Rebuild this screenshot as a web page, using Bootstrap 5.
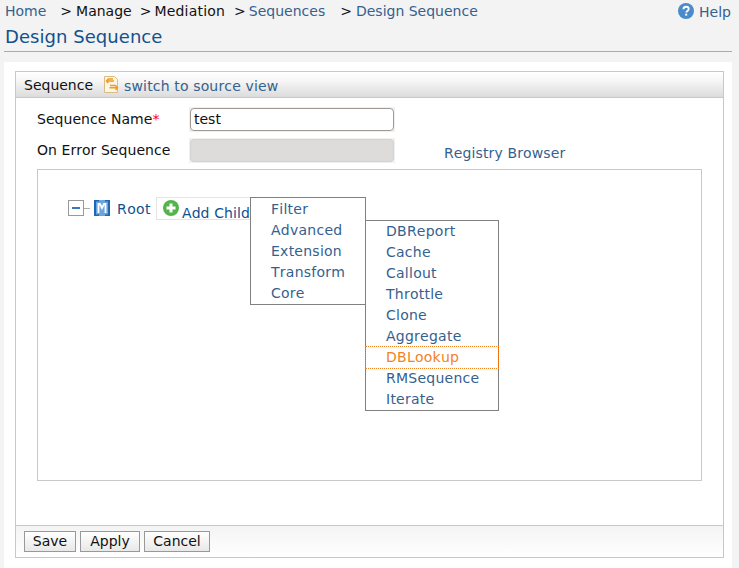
<!DOCTYPE html>
<html lang="en">
<head>
<meta charset="utf-8">
<title>Design Sequence</title>
<link rel="stylesheet" href="https://cdn.jsdelivr.net/npm/bootstrap@5.3.0/dist/css/bootstrap.min.css">
<style>
html,body{height:568px;overflow:hidden}
body{background:#f3f3f3;font-family:"DejaVu Sans",sans-serif;font-size:14px;line-height:17px;color:#111;font-kerning:none}
a{color:#35618f;text-decoration:none}
.crumbs{padding:3px 8px 0 5px;height:25px}
.crumbs .sep{color:#111}
.crumbs .sep-1{margin-left:14px;margin-right:4px}
.crumbs .sep-2{margin-left:8px;margin-right:3px}
.crumbs .sep-3{margin-left:9px;margin-right:3px}
.crumbs .sep-4{margin-left:15px;margin-right:4px}
.crumbs .plain{color:#111}
.crumbs .wide-word{letter-spacing:.2px}
.help-link{display:flex;align-items:flex-start;gap:5px;color:#35618f;margin-top:1px}
.help-link svg{margin-top:-1px}
.page-title{font-size:18px;line-height:22px;color:#12508e;font-weight:400;margin:0 0 0 5px;height:26px;padding-top:1px;font-kerning:none;letter-spacing:.05px}
.title-rule{border-bottom:1px solid #a0aac4;margin:0 7px 0 4px;height:1px}
.sheet{background:#fff;margin:10px 7px 0 4px;padding:9px 8px 0 11px;height:506px}
.seq-box{border:1px solid #c8c8c8;height:487px;display:flex;flex-direction:column}
.seq-head{height:26px;flex:none;border-bottom:1px solid #c8c8c8;background:linear-gradient(#fff,#f6f6f6 35%,#dcdcdc);display:flex;align-items:center;padding:2px 0 0 8px}
.seq-head .lbl{margin-right:11px}
.seq-head a{display:flex;align-items:center;gap:5px;margin-top:1px;letter-spacing:.15px}
.seq-head svg{margin-top:-3px}
.seq-body{flex:1;padding:0 21px;position:relative}
.field-row{display:flex;align-items:center}
.field-row label{width:153px;margin:0;letter-spacing:.05px}
.req{color:#f00}
.in-wrap{background:#f0f0f0;padding:1px;margin-left:-1px}
.in-box{display:block;width:204px;height:23px;border:1px solid #a09a96;border-radius:4px;background:#fff;padding:0 3px 2px;font-size:14px;line-height:20px;color:#111;font-family:inherit;font-kerning:none}
.in-box.off{background:#dedbdb;border-color:#d4d1d1}
.first-row{padding-top:9px}
.second-row{padding-top:6px;height:38px;align-items:flex-start}
.second-row label{padding-top:4px}
.second-row a{margin-left:49px;margin-top:7px;letter-spacing:.12px}
.tree-box{border:1px solid #c8c8c8;height:312px;padding:27px 30px 0;display:flex;align-items:flex-start;position:relative;margin-top:-1px}
.tree-min{width:16px;height:16px;border:1px solid #999;display:flex;align-items:center;justify-content:center;margin-top:3px}
.tree-min i{display:block;width:8px;height:2px;background:#3a76bb}
.tree-dash{width:6px;height:1px;background:#aaa;margin-top:11px;margin-right:4px}
.tree-m{margin-top:3px}
.root-lbl{color:#12508e;margin:4px 5px 0 7px;letter-spacing:.4px}
.add-btn{display:flex;align-items:flex-start;gap:3px;border:1px solid #e4e4e4;height:23px;width:108px;padding:2px 0 0 6px;color:#12508e;overflow:hidden;letter-spacing:.1px}
.add-btn span{margin-top:5px;white-space:nowrap}
.pop{position:absolute;background:#fff;border:1px solid #808080;list-style:none;margin:0;padding:0}
.pop li{height:21px;line-height:21px;padding-left:20px;color:#35618f;letter-spacing:.25px}
.pop-a{left:212px;top:27px;width:116px;height:108px;padding-top:1px}
.pop-b{left:327px;top:50px;width:134px;height:191px;padding-top:0}
.pop-b li.hot{color:#f5821f;border:1px dotted #f5821f;height:23px;line-height:21px;margin:-1px;position:relative}
.seq-foot{height:32px;flex:none;border-top:1px solid #c8c8c8;background:linear-gradient(#f4f4f4,#fff);padding:5px 8px;display:flex;gap:4px;align-items:flex-start}
.plain-btn{height:21px;padding:0 0 1px;font-size:14px;line-height:18px;font-family:inherit;color:#111;background:linear-gradient(#fff,#e8e8e8);border:1px solid #999;border-radius:0;font-kerning:none}
.w-save{width:52px}.w-apply{width:60px}.w-cancel{width:66px}
</style>
</head>
<body>
<div class="crumbs d-flex justify-content-between">
  <div class="text-nowrap"><a href="#">Home</a><span class="sep sep-1">&gt;</span><span class="plain">Manage</span><span class="sep sep-2">&gt;</span><span class="plain wide-word">Mediation</span><span class="sep sep-3">&gt;</span><a href="#">Sequences</a><span class="sep sep-4">&gt;</span><a href="#">Design Sequence</a></div>
  <a href="#" class="help-link">
    <svg width="16" height="16" viewBox="0 0 16 16"><circle cx="8" cy="8" r="8" fill="#4a8ccb"/><path d="M5.400 6.200C5.500 4.600 6.600 3.700 8.100 3.700c1.500 0 2.600.9 2.600 2.200 0 1.100-.6 1.600-1.400 2.200-.7.5-.9.8-.9 1.500" fill="none" stroke="#fff" stroke-width="1.900"/><rect x="7.200" y="10.600" width="2" height="2" fill="#fff"/></svg>
    Help</a>
</div>
<h1 class="page-title">Design Sequence</h1>
<div class="title-rule"></div>
<div class="sheet">
  <div class="seq-box">
    <div class="seq-head">
      <span class="lbl">Sequence</span>
      <a href="#">
        <svg width="15" height="17" viewBox="0 0 15 17"><path d="M.5.5h10l3 3v13H.5z" fill="#fbf6e6" stroke="#d9bd86"/><path d="M9 3H4.200L2.500 5l1.700 2M3 5h7M6 9.500h5.500l2 2.200-2 2.300M13 11.700H5.500" fill="none" stroke="#f39a1e" stroke-width="1.500"/></svg>
        switch to source view</a>
    </div>
    <div class="seq-body">
      <div class="field-row first-row">
        <label for="sq-name">Sequence Name<span class="req">*</span></label>
        <div class="in-wrap"><input id="sq-name" class="in-box" value="test"></div>
      </div>
      <div class="field-row second-row">
        <label>On Error Sequence</label>
        <div class="in-wrap"><div class="in-box off"></div></div>
        <a href="#">Registry Browser</a>
      </div>
      <div class="tree-box">
        <div class="tree-min"><i></i></div><div class="tree-dash"></div>
        <svg class="tree-m" width="16" height="16" viewBox="0 0 16 16"><rect width="16" height="16" fill="#6aa5de"/><path d="M0 0h5v1.500H2v13h3V16H0zM16 0h-5v1.500h3v13h-3V16h5z" fill="#1c68b4"/><path d="M4.500 13V4h1.500L8 8l2-4h1.500v9" fill="none" stroke="#fff" stroke-width="1.800"/></svg>
        <span class="root-lbl">Root</span>
        <div class="add-btn">
          <svg width="16" height="16" viewBox="0 0 16 16"><circle cx="8" cy="8" r="8" fill="#52b44b"/><path d="M8 3.500v9M3.500 8h9" stroke="#fff" stroke-width="3"/></svg>
          <span>Add Child</span>
        </div>
        <ul class="pop pop-a">
          <li>Filter</li><li>Advanced</li><li>Extension</li><li>Transform</li><li>Core</li>
        </ul>
        <ul class="pop pop-b">
          <li>DBReport</li><li>Cache</li><li>Callout</li><li>Throttle</li><li>Clone</li><li>Aggregate</li><li class="hot">DBLookup</li><li>RMSequence</li><li>Iterate</li>
        </ul>
      </div>
    </div>
    <div class="seq-foot">
      <button type="button" class="plain-btn w-save">Save</button>
      <button type="button" class="plain-btn w-apply">Apply</button>
      <button type="button" class="plain-btn w-cancel">Cancel</button>
    </div>
  </div>
</div>
<script src="https://cdn.jsdelivr.net/npm/bootstrap@5.3.0/dist/js/bootstrap.bundle.min.js"></script>
</body>
</html>
